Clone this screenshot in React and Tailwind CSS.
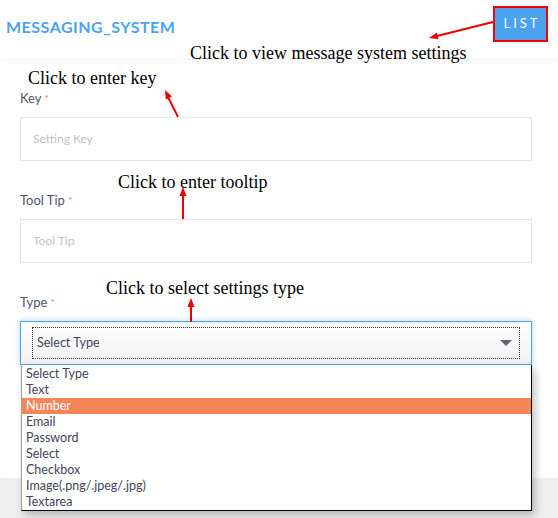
import React from 'react';

const types = [
  'Select Type',
  'Text',
  'Number',
  'Email',
  'Password',
  'Select',
  'Checkbox',
  'Image(.png/.jpeg/.jpg)',
  'Textarea'
];

const Label = ({ text, className = '' }) => (
  <div className={`text-[13px] leading-[16px] text-[#4f5567] ${className}`}>
    {text} <span className="text-[#f47a5a] text-[10px] align-top">*</span>
  </div>
);

const Field = ({ placeholder }) => (
  <div className="h-[44px] border border-[#dfe6f1] flex items-center px-[12px] text-[12px] text-[#c3c3c3]">
    {placeholder}
  </div>
);

// annotation overlay text
const Note = ({ children, className }) => (
  <div className={`absolute text-[18px] leading-[18px] text-black whitespace-nowrap font-['Liberation_Serif',serif] ${className}`}>
    {children}
  </div>
);

const App = () => {
  return (
    <div className="relative w-[558px] h-[518px] bg-[#efefef] overflow-hidden font-['Lato',sans-serif]">
      {/* Header */}
      <div className="relative z-10 h-[58px] bg-white flex justify-between shadow-[0_2px_10px_rgba(0,0,0,0.05)]">
        <div className="pl-[6px] pt-[17px] text-[16px] leading-[20px] font-bold tracking-[0.5px] text-[#4aa3ec]">
          MESSAGING_SYSTEM
        </div>
        <button className="mt-[6px] mr-[10px] w-[55px] h-[36px] border-2 border-[#ff0000] bg-[#4aa3ec] text-white text-[13px] tracking-[3px] pl-[3px]">
          LIST
        </button>
      </div>

      {/* Form */}
      <div className="relative h-[420px] bg-white pl-[20px] pr-[26px] pt-[32px]">
        <Label text="Key" className="mb-[11px]" />
        <Field placeholder="Setting Key" />

        <Label text="Tool Tip" className="mt-[31px] mb-[11px]" />
        <Field placeholder="Tool Tip" />

        <Label text="Type" className="mt-[31px] mb-[11px]" />
        <div className="relative">
          <div className="h-[44px] border border-[#4da3ea] shadow-[0_0_6px_rgba(77,163,234,0.45)] bg-gradient-to-b from-white to-[#f1f1f1] px-[11px] py-[5px]">
            <div className="h-full border border-dotted border-[#333] flex items-center justify-between pl-[4px] pr-[7px] text-[12.5px] text-[#3f4455]">
              <span>Select Type</span>
              <svg width="12" height="6" viewBox="0 0 12 6">
                <polygon points="0,0 12,0 6,6" fill="#5c6472" />
              </svg>
            </div>
          </div>

          {/* open dropdown list */}
          <div className="absolute left-[1px] right-0 top-full z-20 pt-[1px] bg-white border-l border-l-[#a0a0a0] border-r border-b border-black shadow-[3px_4px_8px_rgba(0,0,0,0.25)]">
            {types.map((t) => (
              <div
                key={t}
                className={`h-[16px] leading-[16px] px-[4px] text-[12.5px] ${
                  t === 'Number' ? 'bg-[#f4865a] text-white' : 'text-[#3f4455]'
                }`}
              >
                {t}
              </div>
            ))}
          </div>
        </div>
      </div>

      {/* Annotations */}
      <Note className="left-[190px] top-[44px] z-30">Click to view message system settings</Note>
      <Note className="left-[28px] top-[69px] z-30">Click to enter key</Note>
      <Note className="left-[118px] top-[173px] z-30">Click to enter tooltip</Note>
      <Note className="left-[106px] top-[279px] z-30">Click to select settings type</Note>

      <svg className="absolute inset-0 z-30 pointer-events-none" width="558" height="518">
        <g stroke="#ee0000" strokeWidth="2" fill="none">
          <line x1="493" y1="22" x2="437" y2="36" />
          <line x1="178" y1="117" x2="168" y2="97" />
          <line x1="183" y1="219" x2="183" y2="195" />
          <line x1="191" y1="322" x2="191" y2="306" />
        </g>
        <g fill="#ee0000">
          <polygon points="429,38 438.6,39.2 436.9,32.4" />
          <polygon points="165,90 172,96.6 165.8,99.6" />
          <polygon points="183,187 179.5,196 186.5,196" />
          <polygon points="191,298 187.5,307 194.5,307" />
        </g>
      </svg>
    </div>
  );
};

export default App;
